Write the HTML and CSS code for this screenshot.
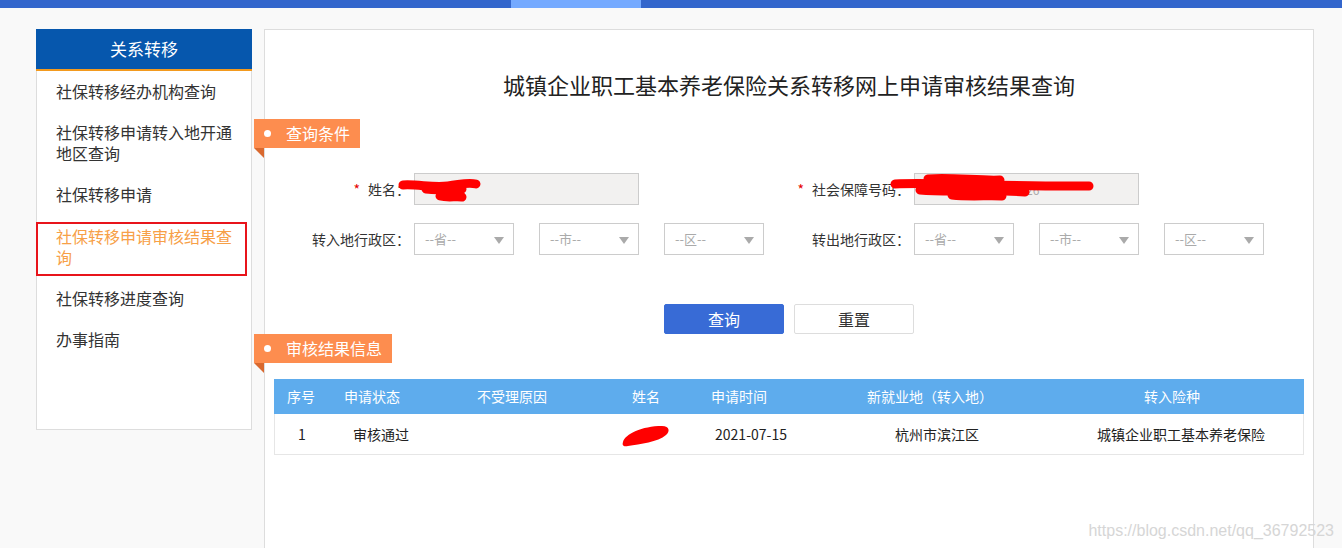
FILE: index.html
```html
<!DOCTYPE html>
<html lang="zh-CN">

<head>
    <meta charset="UTF-8">
    <meta name="viewport" content="width=device-width, initial-scale=1.0">
    <title>关系转移 - 申请审核结果查询</title>
    <link rel="stylesheet" href="styles.css">
</head>

<body>

    <div class="top-bar">
        <div class="top-bar-light"></div>
    </div>

    <div class="page">
        <div class="sidebar">
            <div class="sidebar-title">关系转移</div>
            <ul class="menu">
                <li class="menu-item">社保转移经办机构查询</li>
                <li class="menu-item">社保转移申请转入地开通地区查询</li>
                <li class="menu-item">社保转移申请</li>
                <li class="menu-item active">社保转移申请审核结果查询</li>
                <li class="menu-item">社保转移进度查询</li>
                <li class="menu-item">办事指南</li>
            </ul>
        </div>

        <div class="main">
            <h1 class="page-title">城镇企业职工基本养老保险关系转移网上申请审核结果查询</h1>

            <div class="section-tag">查询条件</div>

            <div class="search-form">
                <div class="form-item">
                    <label class="form-label"><span class="required">*</span>姓名：</label>
                    <div class="field">
                        <input type="text" class="text-input" readonly>
                        <svg class="redact redact-name" width="90" height="30" viewBox="0 0 90 30">
                            <path d="M5 11 C 20 10, 35 14, 50 12 S 70 8, 78 10" />
                            <path d="M28 15 C 45 17, 55 14, 64 15" />
                            <path d="M42 22 C 50 24, 58 22, 64 23" />
                        </svg>
                    </div>
                </div>
                <div class="form-item">
                    <label class="form-label"><span class="required">*</span>社会保障号码：</label>
                    <div class="field">
                        <input type="text" class="text-input" readonly>
                        <span class="masked-tail">26</span>
                        <svg class="redact redact-ssn" width="210" height="30" viewBox="0 0 210 30">
                            <path d="M5 11 C 50 9, 120 14, 199 13" />
                            <path d="M38 6 C 60 4, 90 8, 110 7" />
                            <path d="M30 17 C 60 20, 100 16, 135 19" />
                            <path d="M62 22 C 80 24, 100 22, 112 23" />
                        </svg>
                    </div>
                </div>
                <div class="form-item">
                    <label class="form-label">转入地行政区：</label>
                    <div class="select-group">
                        <div class="select">--省--</div>
                        <div class="select">--市--</div>
                        <div class="select">--区--</div>
                    </div>
                </div>
                <div class="form-item">
                    <label class="form-label">转出地行政区：</label>
                    <div class="select-group">
                        <div class="select">--省--</div>
                        <div class="select">--市--</div>
                        <div class="select">--区--</div>
                    </div>
                </div>
            </div>

            <div class="form-buttons">
                <button class="btn btn-primary">查询</button>
                <button class="btn btn-default">重置</button>
            </div>

            <div class="section-tag">审核结果信息</div>

            <div class="result-table">
                <div class="table-head">
                    <div>序号</div>
                    <div>申请状态</div>
                    <div>不受理原因</div>
                    <div>姓名</div>
                    <div>申请时间</div>
                    <div>新就业地（转入地）</div>
                    <div>转入险种</div>
                    <div></div>
                </div>
                <div class="table-row">
                    <div>1</div>
                    <div>审核通过</div>
                    <div></div>
                    <div class="name-cell">
                        <svg class="redact-blob" width="52" height="26" viewBox="0 0 52 26">
                            <path d="M3 20 C 5 12, 22 4, 42 4 C 50 4, 50 10, 46 13 C 38 20, 20 22, 8 24 C 3 25, 2 23, 3 20 Z" />
                        </svg>
                    </div>
                    <div>2021-07-15</div>
                    <div>杭州市滨江区</div>
                    <div>城镇企业职工基本养老保险</div>
                </div>
            </div>
        </div>
    </div>

    <div class="watermark">https://blog.csdn.net/qq_36792523</div>

</body>

</html>
```

FILE: styles.css
```css
html,
body {
    margin: 0;
    padding: 0;
    overflow: hidden;
}

body {
    background-color: #f9f9f9;
    font-family: "Microsoft YaHei", "Noto Sans CJK SC", sans-serif;
    color: #333;
    height: 548px;
    position: relative;
}

.top-bar {
    height: 8px;
    background-color: #3366cc;
    padding-left: 511px;
}

.top-bar-light {
    width: 130px;
    height: 8px;
    background-color: #75aaff;
}

.page {
    display: flex;
    align-items: flex-start;
    gap: 12px;
    padding: 21px 28px 0 36px;
}

/* 左侧菜单 */
.sidebar {
    width: 216px;
    height: 401px;
    box-sizing: border-box;
    background-color: #fff;
    border: 1px solid #ddd;
    border-top: none;
    flex-shrink: 0;
}

.sidebar-title {
    height: 40px;
    line-height: 40px;
    background-color: #0657ad;
    border-bottom: 2px solid #f39a1e;
    color: #fff;
    font-size: 17px;
    text-align: center;
    margin: 0 -1px;
}

.menu {
    list-style: none;
    margin: 0;
    padding: 0;
}

.menu-item {
    padding: 10px 18px 10px 19px;
    font-size: 16px;
    line-height: 21px;
    color: #333;
    cursor: pointer;
}

.menu-item.active {
    color: #f7a047;
    border: 2px solid #e8141b;
    margin: 7px 4px 2px -1px;
    padding: 2px 10px 6px 18px;
}

/* 右侧内容 */
.main {
    flex: 1;
    height: 540px;
    background-color: #fff;
    border: 1px solid #ddd;
    position: relative;
}

.page-title {
    margin: 39px 0 20px;
    font-size: 22px;
    line-height: 30px;
    font-weight: normal;
    color: #222;
    text-align: center;
}

.section-tag {
    position: relative;
    width: fit-content;
    height: 29px;
    line-height: 29px;
    margin-left: -11px;
    padding: 0 10px 0 32px;
    background-color: #fd8d4f;
    color: #fff;
    font-size: 16px;
}

.section-tag::before {
    content: "";
    position: absolute;
    left: 10px;
    top: 11px;
    width: 7px;
    height: 7px;
    border-radius: 50%;
    background-color: #fff;
}

.section-tag::after {
    content: "";
    position: absolute;
    left: 0;
    top: 100%;
    border-top: 10px solid #d9692f;
    border-left: 10px solid transparent;
}

.search-form {
    display: grid;
    grid-template-columns: 500px 500px;
    row-gap: 18px;
    margin: 25px 0 0 2px;
}

.form-item {
    display: flex;
    align-items: center;
    gap: 4px;
}

.form-label {
    width: 143px;
    text-align: right;
    font-size: 14px;
    color: #333;
}

.required {
    color: #e60000;
    margin-right: 8px;
}

.field {
    position: relative;
}

.text-input {
    display: block;
    width: 225px;
    height: 32px;
    box-sizing: border-box;
    border: 1px solid #ccc;
    background-color: #f2f1f0;
    outline: none;
}

.masked-tail {
    position: absolute;
    left: 112px;
    top: 8px;
    font-size: 12px;
    color: #aaa;
}

.redact {
    position: absolute;
    fill: none;
    stroke: #ff0000;
    stroke-width: 9;
    stroke-linecap: round;
}

.redact-name {
    left: -16px;
    top: 1px;
}

.redact-ssn {
    left: -24px;
    top: 0;
}

.redact-blob {
    position: absolute;
    left: 19px;
    top: 8px;
    fill: #ff0000;
}

.select-group {
    display: flex;
    gap: 25px;
}

.select {
    position: relative;
    width: 100px;
    height: 32px;
    line-height: 30px;
    box-sizing: border-box;
    border: 1px solid #ccc;
    background-color: #fff;
    padding-left: 10px;
    font-size: 13px;
    color: #aaa;
}

.select::after {
    content: "";
    position: absolute;
    right: 9px;
    top: 13px;
    border-top: 7px solid #aaa;
    border-left: 5px solid transparent;
    border-right: 5px solid transparent;
}

.form-buttons {
    display: flex;
    justify-content: center;
    gap: 10px;
    margin-top: 49px;
}

.btn {
    width: 120px;
    height: 30px;
    box-sizing: border-box;
    border-radius: 2px;
    font-family: inherit;
    font-size: 16px;
    cursor: pointer;
}

.btn-primary {
    background-color: #386bd6;
    border: 1px solid #386bd6;
    color: #fff;
}

.btn-default {
    background-color: #fff;
    border: 1px solid #ddd;
    color: #333;
}

/* 结果表格 */
.result-table {
    margin: 16px 9px 0;
    font-size: 14px;
}

.table-head {
    display: grid;
    grid-template-columns: 54px 88px 192px 76px 110px 272px 212px 1fr;
    height: 35px;
    line-height: 35px;
    background-color: #5eaced;
    color: #fff;
    text-align: center;
}

.table-row {
    display: grid;
    grid-template-columns: 54px 104px 168px 86px 128px 244px 1fr;
    height: 40px;
    line-height: 40px;
    border: 1px solid #e6e6e6;
    border-top: none;
    color: #222;
    text-align: center;
}

.name-cell {
    position: relative;
}

.watermark {
    position: absolute;
    right: 8px;
    bottom: 8px;
    font-family: "Liberation Sans", Arial, sans-serif;
    font-size: 16px;
    color: #d6d6d6;
}
```
